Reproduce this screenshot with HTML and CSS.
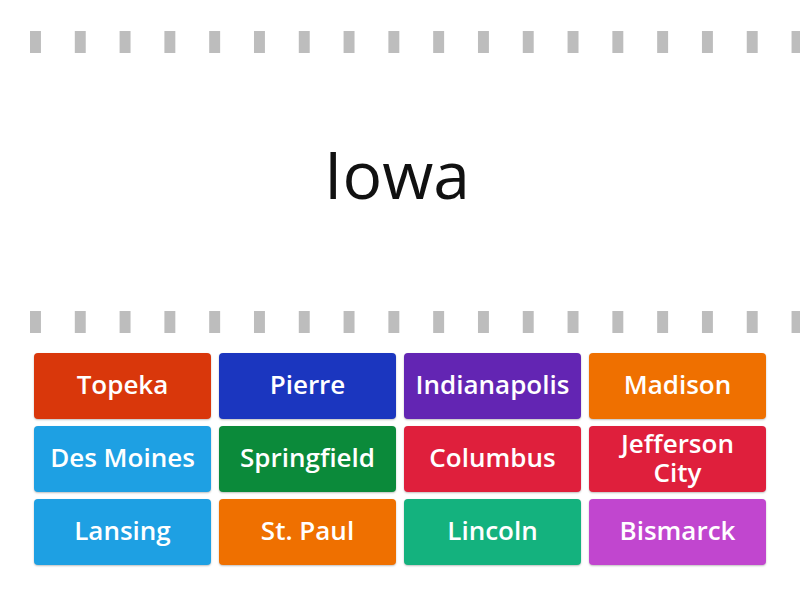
FILE: index.html
```html
<!DOCTYPE html>
<html lang="en">
<head>
<meta charset="utf-8">
<title>Match up: state capitals</title>
<link rel="stylesheet" href="styles.css">
</head>
<body>
<main class="board">
  <div class="dashes"></div>
  <section class="prompt">
    <h1 class="prompt-text">Iowa</h1>
  </section>
  <div class="dashes"></div>
  <section class="tiles">
    <button class="tile c-red-orange">Topeka</button>
    <button class="tile c-blue">Pierre</button>
    <button class="tile c-purple">Indianapolis</button>
    <button class="tile c-orange">Madison</button>
    <button class="tile c-sky">Des Moines</button>
    <button class="tile c-green">Springfield</button>
    <button class="tile c-red">Columbus</button>
    <button class="tile c-red">Jefferson City</button>
    <button class="tile c-sky">Lansing</button>
    <button class="tile c-orange">St. Paul</button>
    <button class="tile c-teal">Lincoln</button>
    <button class="tile c-magenta">Bismarck</button>
  </section>
</main>
</body>
</html>
```

FILE: styles.css
```css
html, body {
  margin: 0;
  padding: 0;
  background: #ffffff;
}

.board {
  width: 800px;
  height: 600px;
  overflow: hidden;
  display: flex;
  flex-direction: column;
  font-family: "Open Sans", "Noto Sans", sans-serif;
}

/* grey dashed separator strip */
.dashes {
  height: 22px;
  flex: none;
  background-image: linear-gradient(to right, #bdbdbd 0 11px, transparent 11px);
  background-size: 44.8px 22px;
  background-position: 30px 0;
  background-repeat: repeat-x;
}

.dashes:first-child {
  margin-top: 31px;
}

.prompt {
  height: 258px;
  box-sizing: border-box;
  padding-bottom: 18px;
  flex: none;
  display: flex;
  align-items: center;
  justify-content: center;
}

.prompt-text {
  margin: 0;
  font-size: 66px;
  font-weight: 400;
  color: #111111;
  line-height: 1;
  padding-right: 6px;
}

.tiles {
  display: grid;
  grid-template-columns: repeat(4, 177px);
  grid-auto-rows: 66px;
  column-gap: 8px;
  row-gap: 7px;
  padding: 20px 0 0 34px;
}

.tile {
  border: none;
  border-radius: 4px;
  margin: 0;
  padding: 0 8px 3px;
  font-family: inherit;
  font-size: 26px;
  font-weight: 600;
  line-height: 29px;
  color: #ffffff;
  text-align: center;
  box-shadow: 0 1px 2px rgba(0, 0, 0, 0.25);
  cursor: pointer;
}

.c-red-orange { background: #d9370b; }
.c-blue       { background: #1b36bf; }
.c-purple     { background: #6325b3; }
.c-orange     { background: #ef7000; }
.c-sky        { background: #1ea0e3; }
.c-green      { background: #0b8a3a; }
.c-red        { background: #df1f3c; }
.c-teal       { background: #14b27e; }
.c-magenta    { background: #c146cf; }
```
